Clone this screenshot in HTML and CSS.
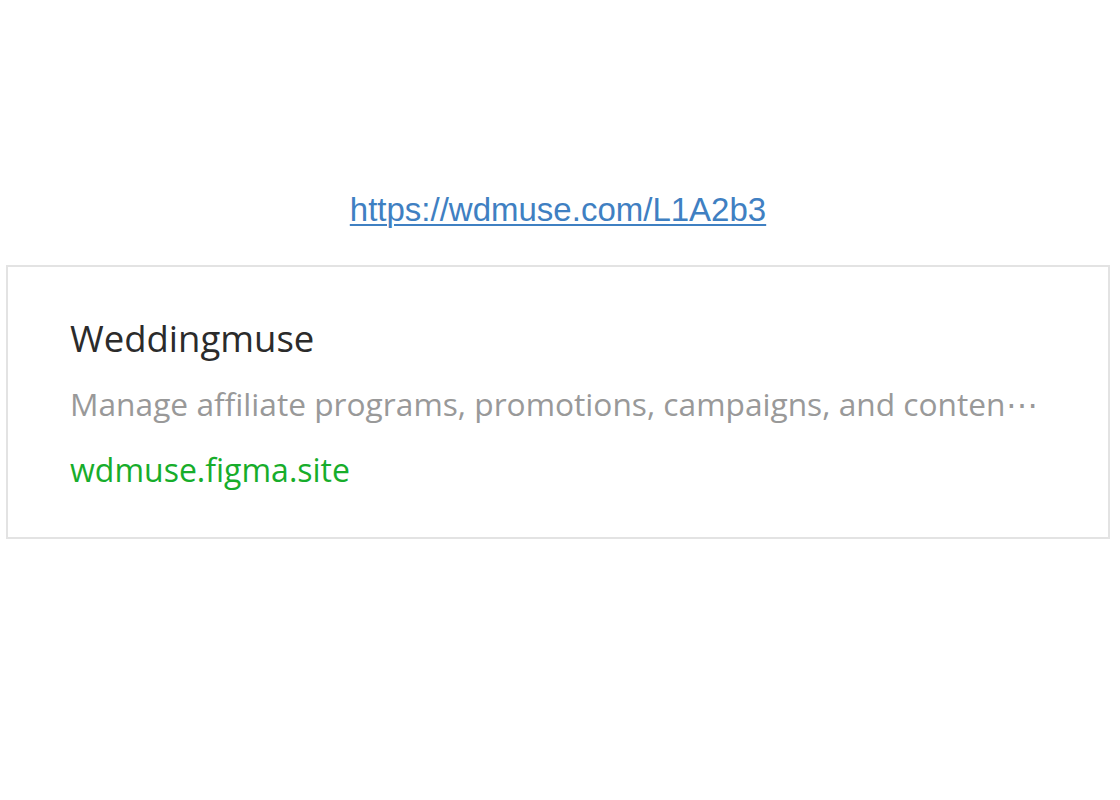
FILE: index.html
```html
<!DOCTYPE html>
<html>
<head>
<meta charset="utf-8">
<link rel="stylesheet" href="styles.css">
</head>
<body>
<div class="page">
  <div class="link-row"><a class="short-link" href="#">https://wdmuse.com/L1A2b3</a></div>
  <div class="card">
    <div class="card-title">Weddingmuse</div>
    <div class="card-desc">Manage affiliate programs, promotions, campaigns, and conten⋯</div>
    <div class="card-domain">wdmuse.figma.site</div>
  </div>
</div>
</body>
</html>
```
FILE: styles.css
```css
html, body {
  margin: 0;
  padding: 0;
  background: #ffffff;
}
.page {
  width: 1120px;
  height: 800px;
  padding: 188px 10px 0 6px;
  box-sizing: border-box;
}
.link-row {
  text-align: center;
  height: 77px;
}
.short-link {
  font-family: "Liberation Sans", Arial, sans-serif;
  font-size: 33px;
  line-height: 44px;
  color: #3f80c2;
  text-decoration: underline;
  text-underline-offset: 3px;
  text-decoration-thickness: 2px;
}
.card {
  border: 2px solid #e3e3e3;
  padding: 38px 40px 40px 62px;
  height: 274px;
  box-sizing: border-box;
  font-family: "Open Sans", "Noto Sans", sans-serif;
}
.card-title {
  font-size: 36.5px;
  line-height: 66px;
  color: #2b2b2b;
}
.card-desc {
  font-size: 31.7px;
  line-height: 66px;
  color: #999999;
  white-space: nowrap;
}
.card-domain {
  font-size: 32px;
  line-height: 66px;
  color: #17ad2b;
}
```
